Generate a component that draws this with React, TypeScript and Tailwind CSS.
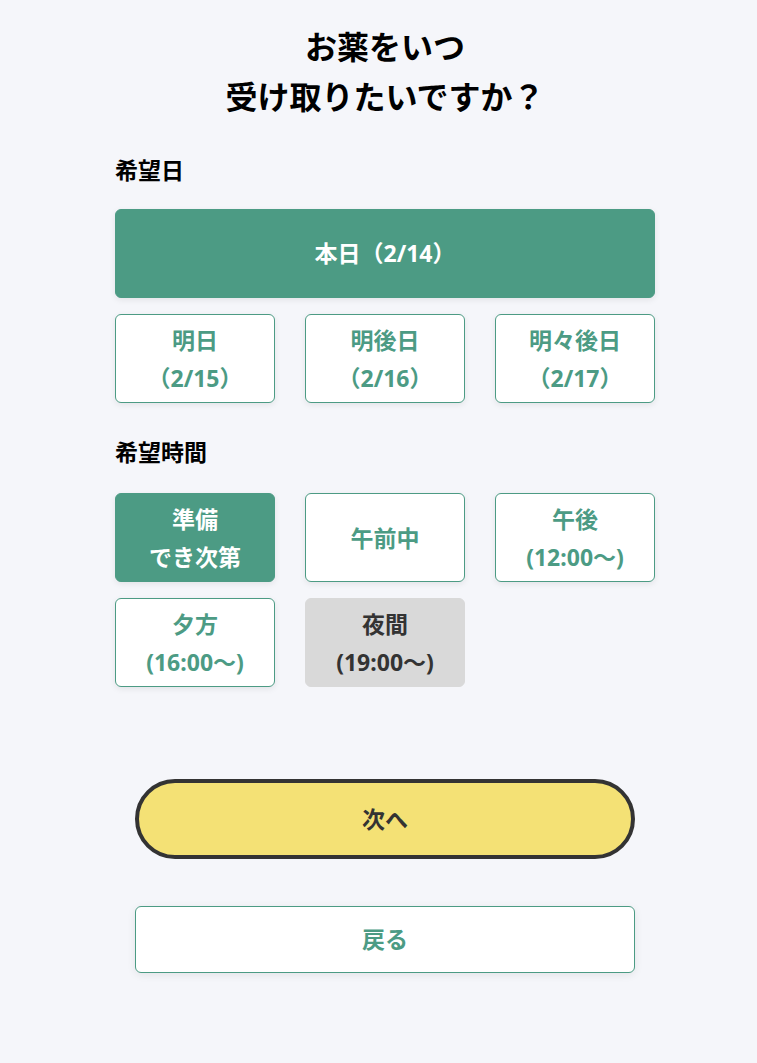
import React, { useState } from 'react';

const font = { fontFamily: '"Noto Sans", "Noto Sans CJK JP", sans-serif' };

interface Choice {
  id: string;
  lines: string[];
  disabled?: boolean;
}

const days: Choice[] = [
  { id: 'd1', lines: ['明日', '（2/15）'] },
  { id: 'd2', lines: ['明後日', '（2/16）'] },
  { id: 'd3', lines: ['明々後日', '（2/17）'] },
];

const times: Choice[] = [
  { id: 'asap', lines: ['準備', 'でき次第'] },
  { id: 'am', lines: ['午前中'] },
  { id: 'pm', lines: ['午後', '(12:00〜)'] },
  { id: 'eve', lines: ['夕方', '(16:00〜)'] },
  { id: 'night', lines: ['夜間', '(19:00〜)'], disabled: true },
];

const ChoiceButton: React.FC<{
  choice: Choice;
  selected: boolean;
  onSelect: () => void;
}> = ({ choice, selected, onSelect }) => {
  let cls = 'bg-white text-[#4c9b84] border border-[#4c9b84] shadow-[0_2px_6px_rgba(0,0,0,0.08)]';
  if (selected) cls = 'bg-[#4c9b84] text-white border border-[#4c9b84] shadow-[0_2px_6px_rgba(0,0,0,0.08)]';
  if (choice.disabled) cls = 'bg-[#d9d9d9] text-[#333333] border border-[#d9d9d9]';
  return (
    <button
      type="button"
      onClick={() => !choice.disabled && onSelect()}
      className={`h-[89px] rounded-md flex flex-col items-center justify-center text-[23px] font-bold leading-[38px] ${cls}`}
    >
      {choice.lines.map((l) => (
        <span key={l}>{l}</span>
      ))}
    </button>
  );
};

export default function App() {
  const [day, setDay] = useState('d0');
  const [time, setTime] = useState('asap');

  return (
    <div className="min-h-[1063px] bg-[#f5f6fa] text-black" style={font}>
      <div className="w-[540px] ml-[115px] pt-[22px]">
        <h1 className="text-center text-[32px] font-bold leading-[50px]">
          お薬をいつ
          <br />
          受け取りたいですか？
        </h1>

        <h2 className="mt-[33px] text-[23px] font-bold leading-[30px]">希望日</h2>
        <div className="mt-[24px] flex flex-col gap-4">
          <button
            type="button"
            onClick={() => setDay('d0')}
            className={`h-[89px] rounded-md text-[23px] font-bold border border-[#4c9b84] shadow-[0_2px_6px_rgba(0,0,0,0.08)] ${
              day === 'd0' ? 'bg-[#4c9b84] text-white' : 'bg-white text-[#4c9b84]'
            }`}
          >
            本日（2/14）
          </button>
          <div className="grid grid-cols-3 gap-x-[30px]">
            {days.map((d) => (
              <ChoiceButton key={d.id} choice={d} selected={day === d.id} onSelect={() => setDay(d.id)} />
            ))}
          </div>
        </div>

        <h2 className="mt-[34px] text-[23px] font-bold leading-[30px]">希望時間</h2>
        <div className="mt-[26px] grid grid-cols-3 gap-x-[30px] gap-y-4">
          {times.map((t) => (
            <ChoiceButton key={t.id} choice={t} selected={time === t.id} onSelect={() => setTime(t.id)} />
          ))}
        </div>

        <div className="mt-[92px] flex flex-col items-center gap-[47px]">
          <button
            type="button"
            className="w-[500px] h-[80px] rounded-full bg-[#f4e175] border-4 border-[#333333] text-[23px] font-bold text-[#333333]"
          >
            次へ
          </button>
          <button
            type="button"
            className="w-[500px] h-[67px] rounded-md bg-white border border-[#4c9b84] text-[23px] font-bold text-[#4c9b84] shadow-[0_2px_8px_rgba(0,0,0,0.08)]"
          >
            戻る
          </button>
        </div>
      </div>
    </div>
  );
}
